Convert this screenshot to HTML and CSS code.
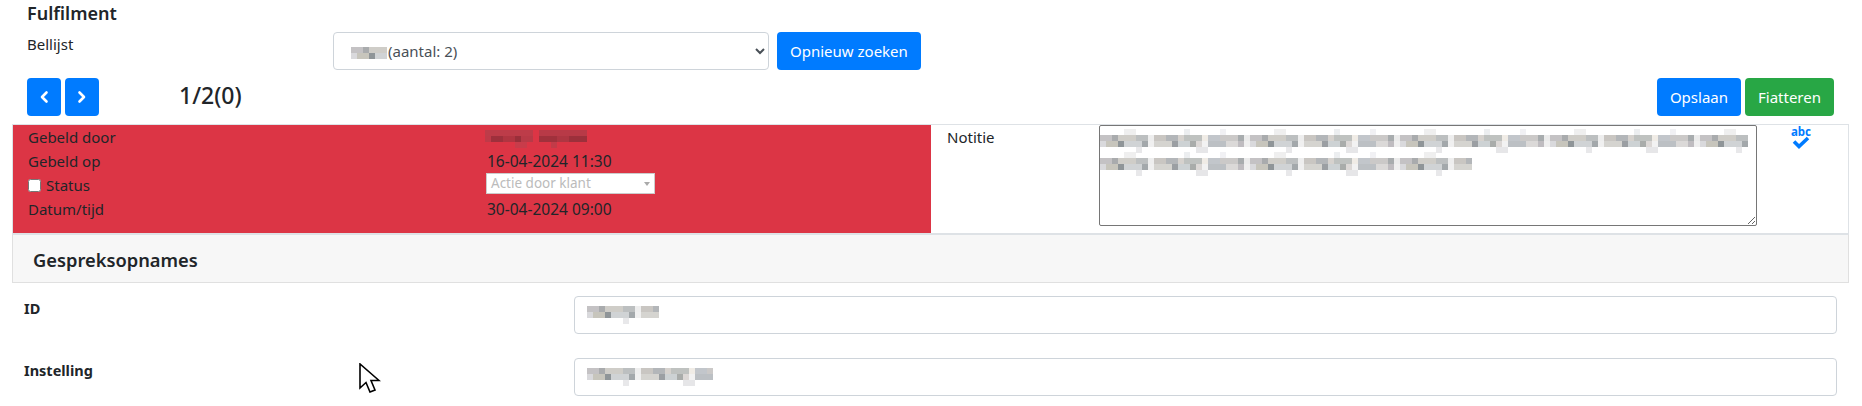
FILE: index.html
```html
<!DOCTYPE html>
<html lang="nl">
<head>
<meta charset="utf-8">
<title>Fulfilment</title>
<link rel="stylesheet" href="styles.css">
</head>
<body>
<svg class="defs" width="0" height="0" aria-hidden="true">
  <defs>
    <pattern id="mosaic" width="150" height="24" patternUnits="userSpaceOnUse">
      <rect x="24" y="0" width="12" height="6" fill="#efefef"/><rect x="84" y="0" width="6" height="6" fill="#eceef0"/><rect x="120" y="0" width="6" height="6" fill="#f1f1f4"/>
      <rect x="0" y="6" width="150" height="12" fill="#dcdcde"/>
      <rect x="0" y="6" width="12" height="6" fill="#c4c2c4"/><rect x="12" y="6" width="6" height="6" fill="#a9abad"/><rect x="18" y="6" width="18" height="6" fill="#cfcdc8"/><rect x="36" y="6" width="12" height="6" fill="#bcbfc0"/><rect x="48" y="6" width="6" height="6" fill="#eeeeee"/><rect x="54" y="6" width="12" height="6" fill="#c9c6c2"/><rect x="66" y="6" width="12" height="6" fill="#b3b6b9"/><rect x="78" y="6" width="6" height="6" fill="#d6d2ce"/><rect x="84" y="6" width="18" height="6" fill="#bfc2c0"/><rect x="102" y="6" width="6" height="6" fill="#f0ece6"/><rect x="108" y="6" width="12" height="6" fill="#c2c6cb"/><rect x="120" y="6" width="18" height="6" fill="#cbc9c8"/><rect x="138" y="6" width="6" height="6" fill="#a8acae"/><rect x="144" y="6" width="6" height="6" fill="#ebebeb"/>
      <rect x="0" y="12" width="6" height="6" fill="#d9d9dc"/><rect x="6" y="12" width="12" height="6" fill="#c7c5bc"/><rect x="18" y="12" width="6" height="6" fill="#8f9598"/><rect x="24" y="12" width="18" height="6" fill="#d0d3d5"/><rect x="42" y="12" width="6" height="6" fill="#a3a8ab"/><rect x="48" y="12" width="6" height="6" fill="#f0f0f0"/><rect x="54" y="12" width="18" height="6" fill="#d5d4d0"/><rect x="72" y="12" width="6" height="6" fill="#9b9fa3"/><rect x="78" y="12" width="12" height="6" fill="#cdd2d4"/><rect x="90" y="12" width="6" height="6" fill="#a9acaa"/><rect x="96" y="12" width="6" height="6" fill="#dcd8d6"/><rect x="102" y="12" width="6" height="6" fill="#f2f2f2"/><rect x="108" y="12" width="18" height="6" fill="#bcc0c4"/><rect x="126" y="12" width="12" height="6" fill="#dbd9d8"/><rect x="138" y="12" width="6" height="6" fill="#bfbcc0"/><rect x="144" y="12" width="6" height="6" fill="#efefef"/>
      <rect x="36" y="18" width="6" height="6" fill="#e8e8ea"/><rect x="96" y="18" width="12" height="6" fill="#e6e6e8"/>
    </pattern>
    <pattern id="mosaic-red" width="102" height="18" patternUnits="userSpaceOnUse">
      <rect x="0" y="0" width="48" height="6" fill="#bd3c49"/><rect x="48" y="0" width="6" height="6" fill="#dc3545"/><rect x="54" y="0" width="48" height="6" fill="#b83a47"/>
      <rect x="0" y="6" width="6" height="6" fill="#bf3a48"/><rect x="6" y="6" width="12" height="6" fill="#9e303c"/><rect x="18" y="6" width="12" height="6" fill="#b03541"/><rect x="30" y="6" width="6" height="6" fill="#9a2f3a"/><rect x="36" y="6" width="12" height="6" fill="#b83a47"/><rect x="54" y="6" width="18" height="6" fill="#a0313c"/><rect x="72" y="6" width="12" height="6" fill="#ae3642"/><rect x="84" y="6" width="18" height="6" fill="#9c303b"/>
      <rect x="30" y="12" width="12" height="6" fill="#c83c4a"/><rect x="66" y="12" width="6" height="6" fill="#c23b48"/>
    </pattern>
  </defs>
</svg>

<header class="top">
  <h1 class="title">Fulfilment</h1>
  <div class="list-row">
    <label class="list-label" for="bellijst">Bellijst</label>
    <div class="overlay-host">
      <select class="list-select" id="bellijst"><option>(aantal: 2)</option></select>
      <svg class="mask mask-select" width="36" height="18"><rect transform="translate(0,-6)" y="6" width="36" height="18" fill="url(#mosaic)"/></svg>
    </div>
    <button class="btn btn-blue" type="button">Opnieuw zoeken</button>
  </div>
  <div class="nav-row">
    <button class="btn btn-blue btn-icon" type="button" aria-label="Vorige">
      <svg width="10" height="14" viewBox="0 0 10 14"><path d="M7.5 2.5 3 7l4.5 4.5" fill="none" stroke="#fff" stroke-width="2.6" stroke-linecap="round" stroke-linejoin="round"/></svg>
    </button>
    <button class="btn btn-blue btn-icon" type="button" aria-label="Volgende">
      <svg width="10" height="14" viewBox="0 0 10 14"><path d="M2.5 2.5 7 7l-4.5 4.5" fill="none" stroke="#fff" stroke-width="2.6" stroke-linecap="round" stroke-linejoin="round"/></svg>
    </button>
    <span class="count">1/2(0)</span>
    <div class="actions">
      <button class="btn btn-blue" type="button">Opslaan</button>
      <button class="btn btn-green" type="button">Fiatteren</button>
    </div>
  </div>
</header>

<section class="panel">
  <div class="call-info">
    <span>Gebeld door</span>
    <span><svg class="mosaic-inline" width="102" height="18"><rect width="102" height="18" fill="url(#mosaic-red)"/></svg></span>
    <span>Gebeld op</span>
    <span class="value">16-04-2024 11:30</span>
    <label class="status"><input type="checkbox"> Status</label>
    <span class="fake-select">Actie door klant<i class="caret"></i></span>
    <span>Datum/tijd</span>
    <span class="value">30-04-2024 09:00</span>
  </div>
  <div class="note">
    <span class="note-label">Notitie</span>
    <div class="overlay-host note-box">
      <textarea class="note-text" aria-label="Notitie"></textarea>
      <svg class="mask mask-l1" width="648" height="24"><rect width="648" height="24" fill="url(#mosaic)"/></svg>
      <svg class="mask mask-l2" width="372" height="24"><rect width="372" height="24" fill="url(#mosaic)"/></svg>
    </div>
    <div class="spell">
      <span class="spell-abc">abc</span>
      <svg width="18" height="13" viewBox="0 0 18 13"><path d="M2 5.5 7 10.5 16 2" fill="none" stroke="#007bff" stroke-width="3.6"/></svg>
    </div>
  </div>
</section>

<h2 class="section-head">Gespreksopnames</h2>

<div class="fields">
  <div class="field">
    <label class="field-label">ID</label>
    <div class="overlay-host field-box">
      <input class="field-input" type="text" aria-label="ID">
      <svg class="mask mask-id" width="72" height="18"><rect transform="translate(0,-6)" y="6" width="72" height="18" fill="url(#mosaic)"/></svg>
    </div>
  </div>
  <div class="field">
    <label class="field-label">Instelling</label>
    <div class="overlay-host field-box">
      <input class="field-input" type="text" aria-label="Instelling">
      <svg class="mask mask-inst" width="126" height="18"><rect transform="translate(0,-6)" y="6" width="126" height="18" fill="url(#mosaic)"/></svg>
    </div>
  </div>
</div>

<svg class="cursor" width="22" height="30" viewBox="0 0 22 30" aria-hidden="true"><path d="M1 1v24l6-5.5 4 9.5 5-2-4-9.5h8z" fill="#fff" stroke="#000" stroke-width="1.6" stroke-linejoin="miter"/></svg>
</body>
</html>
```
FILE: styles.css
```css
* { box-sizing: border-box; }
html, body { margin: 0; height: 406px; overflow: hidden; }
body {
  position: relative;
  background: #fff;
  color: #212529;
  font-family: "Noto Sans", "Open Sans", sans-serif;
  font-size: 15px;
  line-height: 24px;
}
.defs { position: absolute; }

.top { padding: 0 28px 0 27px; }
.title { margin: 1px 0 7px; height: 24px; font-size: 18px; font-weight: 600; line-height: 24px; }
.list-row { display: flex; align-items: flex-start; gap: 8px; }
.list-label { width: 298px; }
.overlay-host { position: relative; }
.list-select {
  display: block;
  width: 436px;
  height: 38px;
  padding: 0 8px 0 50px;
  border: 1px solid #ced4da;
  border-radius: 4px;
  background: #fff;
  color: #495057;
  font: inherit;
}
.btn {
  height: 38px;
  padding: 0 12px;
  border: 1px solid transparent;
  border-radius: 4px;
  color: #fff;
  font: inherit;
  font-size: 15px;
}
.btn-blue { background: #007bff; }
.btn-green { background: #28a745; }
.btn-icon { display: flex; align-items: center; justify-content: center; width: 34px; padding: 0; }

.nav-row { display: flex; align-items: center; gap: 4px; margin-top: 8px; }
.count { margin: 0 0 4px 76px; font-size: 23px; font-weight: 500; }
.actions { display: flex; gap: 4px; margin-left: auto; }

.mask { position: absolute; }
.mask-select { left: 18px; top: 15px; }
.mosaic-inline { display: block; margin-top: 5px; margin-left: -2px; }

.panel {
  display: grid;
  grid-template-columns: 918px 1fr;
  margin: 8px 13px 0 12px;
  border: 1px solid #dee2e6;
  border-bottom: 2px solid #dee2e6;
}
.call-info {
  display: grid;
  grid-template-columns: 459px 1fr;
  grid-auto-rows: 24px;
  align-content: start;
  height: 108px;
  padding: 0 0 0 15px;
  background: #dc3545;
  font-size: 15px;
}
.value { font-size: 15.5px; }
.status { display: flex; align-items: center; gap: 5px; }
.status input { width: 13px; height: 13px; margin: 0; }
.fake-select {
  position: relative;
  align-self: start;
  width: 169px;
  height: 21px;
  margin-left: -1px;
  padding-left: 4px;
  border: 1px solid #ccc;
  background: #fff;
  color: #bbb;
  font-size: 13.5px;
  line-height: 19px;
}
.caret {
  position: absolute;
  right: 4px;
  top: 8px;
  border-top: 4px solid #aaa;
  border-left: 3px solid transparent;
  border-right: 3px solid transparent;
}
.note {
  display: flex;
  align-items: flex-start;
  height: 108px;
  padding-left: 16px;
  background: #fff;
  font-size: 15px;
}
.note-label { width: 152px; }
.note-box { width: 658px; height: 101px; }
.note-text {
  display: block;
  width: 100%;
  height: 100%;
  border: 1px solid #767676;
  border-radius: 2px;
  background: #fff;
}
.mask-l1 { left: 1px; top: 4px; }
.mask-l2 { left: 1px; top: 27px; }
.spell { display: flex; flex-direction: column; align-items: center; width: 88px; padding-top: 2px; }
.spell-abc { height: 9px; color: #007bff; font-size: 11.5px; font-weight: 700; line-height: 9px; }

.section-head {
  height: 48px;
  margin: 0 13px 0 12px;
  padding-left: 20px;
  border: 1px solid #e0e0e0;
  border-top: 0;
  background: #f7f7f7;
  font-size: 18.3px;
  font-weight: 600;
  line-height: 50px;
}

.fields { display: flex; flex-direction: column; gap: 24px; margin-top: 13px; padding: 0 25px 0 24px; }
.field { display: flex; align-items: flex-start; }
.field-label { width: 550px; font-size: 14.5px; font-weight: 700; line-height: 25px; }
.field-box { flex: 1; }
.field-input {
  display: block;
  width: 100%;
  height: 38px;
  border: 1px solid #ced4da;
  border-radius: 4px;
  background: #fff;
}
.mask-id { left: 13px; top: 10px; }
.mask-inst { left: 13px; top: 10px; }

.cursor { position: absolute; left: 359px; top: 363px; }
```
